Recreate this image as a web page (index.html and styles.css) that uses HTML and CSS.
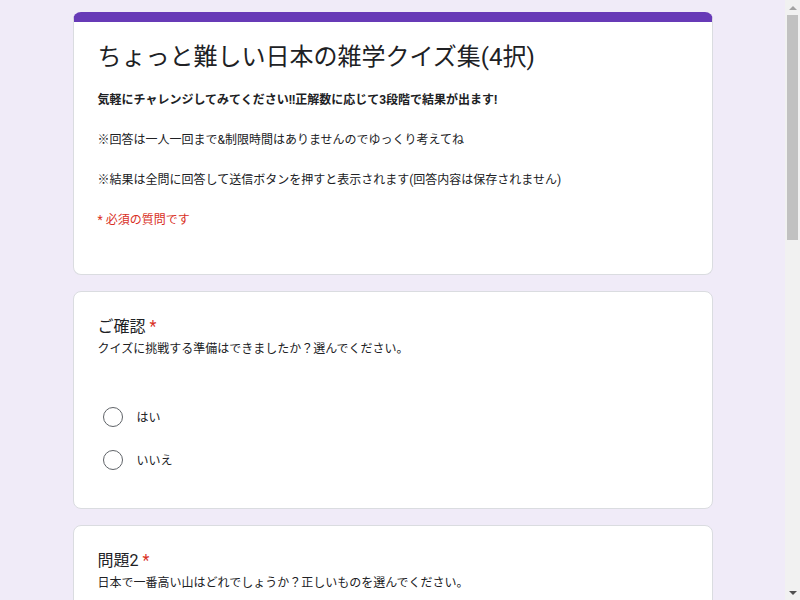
FILE: index.html
```html
<!DOCTYPE html>
<html lang="ja">
<head>
<meta charset="utf-8">
<title>ちょっと難しい日本の雑学クイズ集(4択)</title>
<link rel="stylesheet" href="styles.css">
</head>
<body>
<main class="form">
  <section class="card header-card">
    <h1 class="form-title">ちょっと難しい日本の雑学クイズ集(4択)</h1>
    <div class="form-desc">
      <p class="desc-line strong">気軽にチャレンジしてみてください!!正解数に応じて3段階で結果が出ます!</p>
      <p class="desc-line">※回答は一人一回まで&amp;制限時間はありませんのでゆっくり考えてね</p>
      <p class="desc-line">※結果は全問に回答して送信ボタンを押すと表示されます(回答内容は保存されません)</p>
    </div>
    <p class="required-legend">* 必須の質問です</p>
  </section>

  <section class="card question">
    <div class="q-title">ご確認<span class="req">*</span></div>
    <div class="q-desc">クイズに挑戦する準備はできましたか？選んでください。</div>
    <div class="options">
      <label class="option"><span class="radio"></span><span class="opt-text">はい</span></label>
      <label class="option"><span class="radio"></span><span class="opt-text">いいえ</span></label>
    </div>
  </section>

  <section class="card question">
    <div class="q-title">問題2<span class="req">*</span></div>
    <div class="q-desc">日本で一番高い山はどれでしょうか？正しいものを選んでください。</div>
    <div class="options">
      <label class="option"><span class="radio"></span><span class="opt-text">富士山</span></label>
      <label class="option"><span class="radio"></span><span class="opt-text">北岳</span></label>
      <label class="option"><span class="radio"></span><span class="opt-text">奥穂高岳</span></label>
      <label class="option"><span class="radio"></span><span class="opt-text">間ノ岳</span></label>
    </div>
  </section>

  <section class="card question">
    <div class="q-title">問題3<span class="req">*</span></div>
    <div class="q-desc">日本で一番面積が大きい湖はどれでしょうか？正しいものを選んでください。</div>
    <div class="options">
      <label class="option"><span class="radio"></span><span class="opt-text">琵琶湖</span></label>
      <label class="option"><span class="radio"></span><span class="opt-text">霞ヶ浦</span></label>
      <label class="option"><span class="radio"></span><span class="opt-text">サロマ湖</span></label>
      <label class="option"><span class="radio"></span><span class="opt-text">猪苗代湖</span></label>
    </div>
  </section>

  <section class="card question">
    <div class="q-title">問題4<span class="req">*</span></div>
    <div class="q-desc">日本で一番長い川はどれでしょうか？正しいものを選んでください。</div>
    <div class="options">
      <label class="option"><span class="radio"></span><span class="opt-text">信濃川</span></label>
      <label class="option"><span class="radio"></span><span class="opt-text">利根川</span></label>
      <label class="option"><span class="radio"></span><span class="opt-text">石狩川</span></label>
      <label class="option"><span class="radio"></span><span class="opt-text">天塩川</span></label>
    </div>
  </section>

  <div class="actions">
    <button class="submit" type="button">送信</button>
  </div>
</main>

<div class="scrollbar" aria-hidden="true">
  <span class="sb-arrow sb-up"></span>
  <span class="sb-track"><span class="sb-thumb"></span></span>
  <span class="sb-arrow sb-down"></span>
</div>
</body>
</html>
```

FILE: styles.css
```css
html, body {
  margin: 0;
  padding: 0;
}

body {
  background: #f0ebf8;
  color: #202124;
  font-family: Roboto, "Noto Sans CJK JP", sans-serif;
  margin-right: 15px;
}

.form {
  width: 640px;
  margin: 12px auto 0;
  display: flex;
  flex-direction: column;
  gap: 16px;
  padding-bottom: 40px;
}

.card {
  background: #fff;
  border: 1px solid #dadce0;
  border-radius: 8px;
}

.header-card {
  border-top: 10px solid #673ab7;
  padding: 19px 24px 44px;
}

.form-title {
  margin: 0;
  font-size: 24px;
  line-height: 32px;
  font-weight: 400;
  color: #202124;
}

.form-desc {
  margin-top: 17px;
  display: flex;
  flex-direction: column;
  gap: 20px;
}

.desc-line {
  margin: 0;
  font-size: 12px;
  line-height: 20px;
  color: #202124;
}

.desc-line.strong {
  font-weight: 700;
}

.required-legend {
  margin: 20px 0 0;
  font-size: 12px;
  line-height: 20px;
  color: #d93025;
}

.question {
  padding: 23px 24px 27px;
}

.q-title {
  font-size: 16px;
  line-height: 24px;
  color: #202124;
}

.req {
  color: #d93025;
  padding-left: 4px;
}

.q-desc {
  font-size: 12px;
  line-height: 20px;
  color: #202124;
}

.options {
  margin-top: 36px;
  display: flex;
  flex-direction: column;
}

.option {
  height: 43px;
  display: flex;
  align-items: center;
  gap: 14px;
  padding-left: 5px;
}

.radio {
  width: 18px;
  height: 18px;
  border: 1px solid #5f6368;
  border-radius: 50%;
  flex: none;
}

.opt-text {
  font-size: 12px;
  color: #202124;
}

.actions {
  display: flex;
  padding-top: 8px;
}

.submit {
  background: #673ab7;
  color: #fff;
  border: none;
  border-radius: 4px;
  padding: 9px 24px;
  font-family: Roboto, "Noto Sans CJK JP", sans-serif;
  font-size: 14px;
}

/* fake browser scrollbar (overlay at the window edge) */
.scrollbar {
  position: fixed;
  top: 0;
  right: 0;
  width: 15px;
  height: 100vh;
  background: #f1f1f1;
  display: flex;
  flex-direction: column;
}

.sb-arrow {
  height: 15px;
  flex: none;
  display: flex;
  align-items: center;
  justify-content: center;
}

.sb-up::before {
  content: "";
  border-left: 4px solid transparent;
  border-right: 4px solid transparent;
  border-bottom: 4px solid #a3a3a3;
}

.sb-down::before {
  content: "";
  border-left: 4px solid transparent;
  border-right: 4px solid transparent;
  border-top: 4px solid #505050;
}

.sb-track {
  flex: 1;
  padding: 0 2px;
}

.sb-thumb {
  display: block;
  height: 225px;
  background: #c1c1c1;
}
```
